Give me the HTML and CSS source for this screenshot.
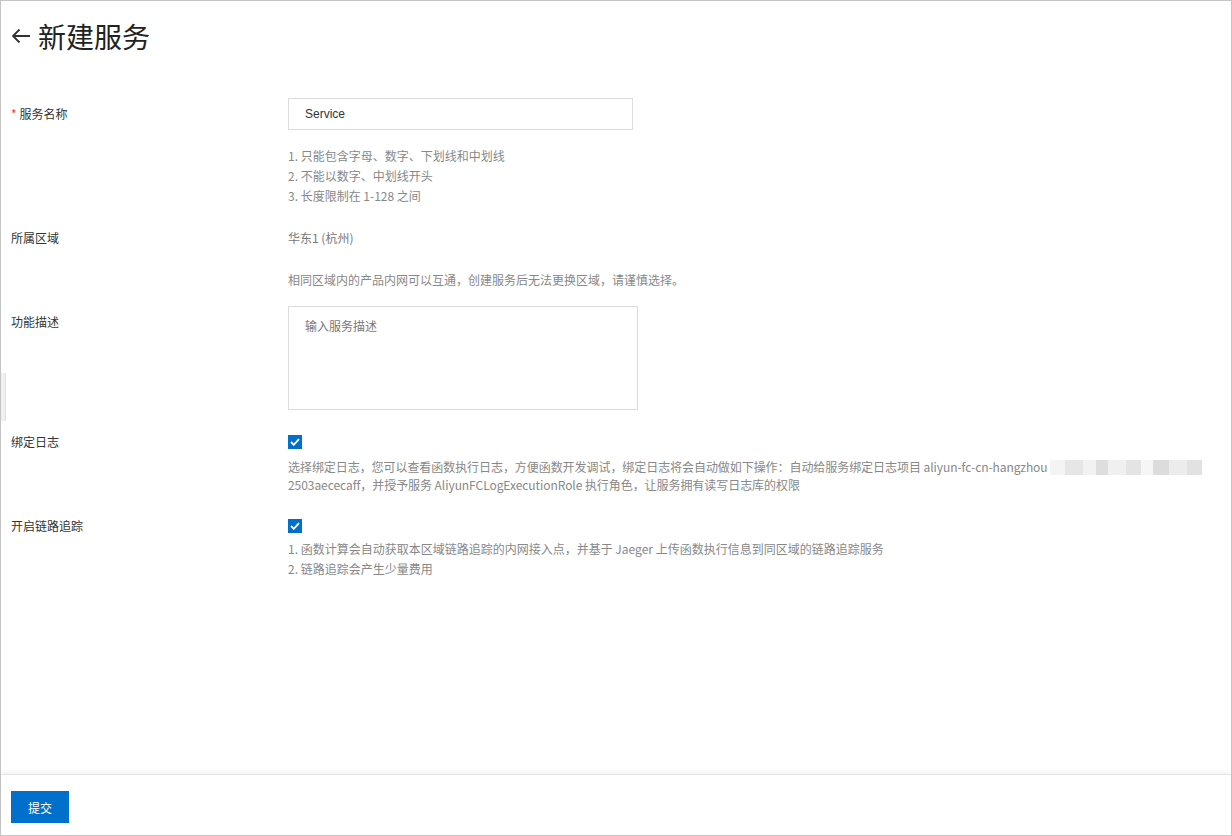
FILE: index.html
```html
<!DOCTYPE html>
<html>
  <head>
    <meta charset="utf-8">
    <link rel="stylesheet" href="styles.css">
  </head>

  <body>
    <div class="page">
      <div class="side-tab"></div>

      <div class="content">
        <div class="page-title">
          <svg class="back" width="20" height="16" viewBox="0 0 20 16">
            <path d="M19 8H2M8.5 1.5L2 8l6.5 6.5" fill="none" stroke="#333" stroke-width="1.8"/>
          </svg>
          <h1>新建服务</h1>
        </div>

        <div class="form">
          <div class="form-item">
            <div class="label"><span class="req">*</span>服务名称</div>
            <div class="control">
              <input class="input" type="text" value="Service">
              <div class="help help-name">
                <div>1. 只能包含字母、数字、下划线和中划线</div>
                <div>2. 不能以数字、中划线开头</div>
                <div>3. 长度限制在 1-128 之间</div>
              </div>
            </div>
          </div>

          <div class="form-item">
            <div class="label">所属区域</div>
            <div class="control">
              <div class="value">华东1 (杭州)</div>
              <div class="help help-region">相同区域内的产品内网可以互通，创建服务后无法更换区域，请谨慎选择。</div>
            </div>
          </div>

          <div class="form-item">
            <div class="label">功能描述</div>
            <div class="control">
              <textarea class="textarea" placeholder="输入服务描述"></textarea>
            </div>
          </div>

          <div class="form-item">
            <div class="label">绑定日志</div>
            <div class="control">
              <div class="check-row"><span class="checkbox"><svg width="10" height="8" viewBox="0 0 10 8"><path d="M1 4l2.8 2.8L9 1.2" fill="none" stroke="#fff" stroke-width="1.8"/></svg></span></div>
              <div class="help help-log">选择绑定日志，您可以查看函数执行日志，方便函数开发调试，绑定日志将会自动做如下操作：自动给服务绑定日志项目 aliyun-fc-cn-hangzhou<span class="masked"></span> 2503aececaff，并授予服务 AliyunFCLogExecutionRole 执行角色，让服务拥有读写日志库的权限</div>
            </div>
          </div>

          <div class="form-item">
            <div class="label">开启链路追踪</div>
            <div class="control">
              <div class="check-row"><span class="checkbox"><svg width="10" height="8" viewBox="0 0 10 8"><path d="M1 4l2.8 2.8L9 1.2" fill="none" stroke="#fff" stroke-width="1.8"/></svg></span></div>
              <div class="help help-trace">
                <div>1. 函数计算会自动获取本区域链路追踪的内网接入点，并基于 Jaeger 上传函数执行信息到同区域的链路追踪服务</div>
                <div>2. 链路追踪会产生少量费用</div>
              </div>
            </div>
          </div>
        </div>
      </div>

      <div class="footer">
        <button class="btn-primary">提交</button>
      </div>
    </div>
  </body>
</html>
```

FILE: styles.css
```css
* {
  box-sizing: border-box;
}

body {
  margin: 0;
  font-family: "Noto Sans CJK SC", "Liberation Sans", sans-serif;
  font-size: 12px;
  color: #333;
}

.page {
  position: relative;
  height: 836px;
  border: 1px solid #c4c4c4;
  display: flex;
  flex-direction: column;
  background: #fff;
}

.side-tab {
  position: absolute;
  left: 0;
  top: 372px;
  width: 5px;
  height: 48px;
  background: #f0f0f0;
  border-right: 1px solid #e2e2e2;
}

.content {
  flex: 1;
  padding: 0 10px;
}

.page-title {
  display: flex;
  align-items: center;
  height: 70px;
  gap: 7px;
}

.page-title .back {
  margin-top: -1px;
}

.page-title h1 {
  margin: 0;
  font-size: 28px;
  font-weight: 400;
  color: #222;
  line-height: 40px;
}

.form {
  padding-top: 27px;
}

.form-item {
  display: flex;
  margin-bottom: 16px;
}

.label {
  width: 277px;
  line-height: 32px;
  color: #333;
}

.req {
  color: #e23c39;
  margin-right: 3px;
}

.control {
  flex: 1;
}

.input {
  display: block;
  width: 345px;
  height: 32px;
  border: 1px solid #dcdcdc;
  padding: 0 16px;
  font-family: "Liberation Sans", "Noto Sans CJK SC", sans-serif;
  font-size: 12px;
  color: #333;
  outline: none;
}

.textarea {
  display: block;
  width: 350px;
  height: 104px;
  border: 1px solid #dcdcdc;
  padding: 10px 16px;
  font-family: "Noto Sans CJK SC", sans-serif;
  font-size: 12px;
  resize: none;
  outline: none;
}

.textarea::placeholder {
  color: #777;
}

.value {
  line-height: 32px;
  color: #777;
}

.help {
  color: #888;
  line-height: 20px;
}

.help-name {
  margin-top: 16px;
}

.help-region {
  margin-top: 16px;
}

.help-log {
  line-height: 18px;
  letter-spacing: -0.06px;
}

.help-trace {
  margin-top: -3px;
}

.check-row {
  height: 32px;
  display: flex;
  align-items: center;
}

.checkbox {
  width: 14px;
  height: 14px;
  background: #0070cc;
  display: flex;
  align-items: center;
  justify-content: center;
}

.masked {
  display: inline-block;
  width: 152px;
  height: 15px;
  vertical-align: -3px;
  margin-left: 2px;
  background:
    linear-gradient(90deg, #f4f4f4 0 10%, #e6e6e6 10% 22%, #f2f2f2 22% 30%, #dedede 30% 38%, #f0f0f0 38% 50%, #e4e4e4 50% 60%, #f6f6f6 60% 68%, #dcdcdc 68% 78%, #ececec 78% 90%, #e2e2e2 90% 100%);
}

.footer {
  height: 61px;
  border-top: 1px solid #e6e6e6;
  box-shadow: 0 -3px 4px rgba(0, 0, 0, 0.04);
  padding: 16px 10px 0;
}

.btn-primary {
  display: block;
  width: 58px;
  height: 32px;
  border: none;
  background: #0070cc;
  color: #fff;
  font-family: "Noto Sans CJK SC", sans-serif;
  font-size: 12px;
  cursor: pointer;
}
```
